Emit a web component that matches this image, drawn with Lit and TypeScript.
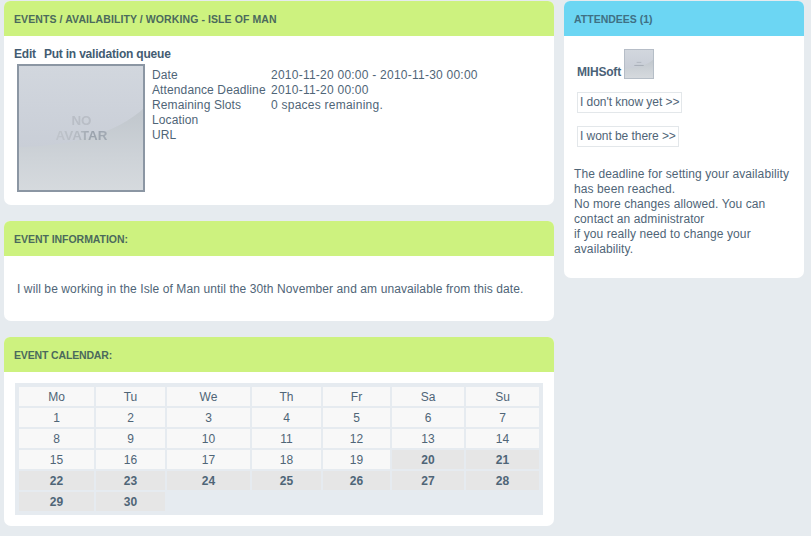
import { LitElement, html, css, svg } from "lit";
import { customElement } from "lit/decorators.js";

const days = Array.from({ length: 30 }, (_, i) => i + 1);

@customElement("app-root")
export class AppRoot extends LitElement {
  static styles = css`
    :host {
      display: block;
      width: 811px;
      height: 536px;
      overflow: hidden;
      background: #e6ebef;
      font-family: "Liberation Sans", Arial, sans-serif;
      font-size: 12px;
      line-height: 15px;
      color: #4f6577;
    }
    .page {
      display: grid;
      grid-template-columns: 550px 240px;
      column-gap: 10px;
      padding: 1px 0 0 4px;
      align-items: start;
    }
    .col {
      display: flex;
      flex-direction: column;
      gap: 16px;
    }
    .panel {
      background: #fff;
      border-radius: 6px 6px 7px 7px;
      overflow: hidden;
    }
    .head {
      height: 35px;
      box-sizing: border-box;
      padding: 11px 10px 0;
      background: #cdf27f;
      font-size: 10.5px;
      line-height: 15px;
      font-weight: bold;
      color: #4b6a5c;
      text-transform: uppercase;
    }
    .head.crumb { letter-spacing: 0.09px; }
    .head.info-h { letter-spacing: -0.04px; }
    .head.cal-h { letter-spacing: -0.15px; }
    .head.blue {
      background: #6cd6f3;
      color: #3f7084;
    }
    .p1 { height: 204px; }
    .p2 { height: 100px; }
    .p3 { height: 189px; }
    .right { height: 277px; }
    .links {
      padding: 11px 10px 0;
      height: 17px;
      box-sizing: content-box;
      margin-bottom: -1px;
      font-weight: bold;
      color: #435c72;
      display: flex;
      gap: 8px;
      letter-spacing: -0.2px;
    }
    .info {
      display: flex;
      padding: 1px 0 0 13px;
    }
    .avatar {
      display: block;
      width: 128px;
      height: 128px;
      flex: none;
    }
    .facts {
      margin-left: 7px;
      padding-top: 4px;
      display: grid;
      grid-template-columns: 119px auto;
      grid-auto-rows: 15px;
      justify-content: start;
      letter-spacing: 0.12px;
      white-space: nowrap;
    }
    .val { letter-spacing: 0.24px; }
    .text {
      padding: 26px 13px 0;
      letter-spacing: 0.1px;
    }
    .cal {
      margin: 11px 11px 0;
      padding: 4px;
      height: 124px;
      background: #e6ebf0;
      display: grid;
      grid-template-columns: 75px 69px 83px 69px 67px 72px 73px;
      grid-auto-rows: 19px;
      gap: 2px;
    }
    .cal div {
      background: #f8f8f8;
      text-align: center;
      line-height: 21px;
      height: 19px;
      overflow: hidden;
    }
    .cal div.off {
      background: #e6e6e6;
      font-weight: bold;
    }
    .user {
      padding: 13px 13px 0;
      display: flex;
      align-items: flex-end;
      gap: 3px;
      height: 30px;
      font-weight: bold;
      color: #4a6277;
      letter-spacing: -0.2px;
    }
    .user span { margin-bottom: -1px; }
    .mini {
      display: block;
      width: 30px;
      height: 30px;
    }
    .btn {
      display: block;
      width: fit-content;
      margin: 13px 0 0 13px;
      padding: 2px 2px 2px 2px;
      border: 1px solid #e3e7ea;
      height: 15px;
      background: #fff;
      letter-spacing: -0.05px;
    }
    .note {
      padding: 20px 10px 0;
      letter-spacing: 0.1px;
    }
  `;

  private avatar(cls: string, big: boolean) {
    const band = "M0 83 C50 83 100 70 128 43 V128 H0 Z";
    return html`<svg class=${cls} viewBox="0 0 128 128" aria-hidden="true">
      <defs>
        <linearGradient id=${"t" + cls} x1="0" y1="0" x2="0" y2="1">
          <stop offset="0" stop-color="#d2d7de" />
          <stop offset="0.65" stop-color="#c9ced7" />
        </linearGradient>
        <linearGradient id=${"b" + cls} x1="0" y1="0" x2="0" y2="1">
          <stop offset="0.1" stop-color="#c2c8ce" />
          <stop offset="0.6" stop-color="#ced3d8" />
          <stop offset="1" stop-color="#d6dade" />
        </linearGradient>
        <linearGradient id=${"x" + cls} x1="0" y1="0" x2="1" y2="0">
          <stop offset="0" stop-color="#c0c5cc" />
          <stop offset="0.45" stop-color="#b4bac2" />
          <stop offset="0.7" stop-color="#9aa2ac" />
          <stop offset="1" stop-color="#a3aab4" />
        </linearGradient>
        <filter id=${"f" + cls}><feGaussianBlur stdDeviation="0.35" /></filter>
      </defs>
      <rect width="128" height="128" fill=${`url(#t${cls})`} />
      ${svg`<path d=${band} fill=${`url(#b${cls})`} />`}
      ${big
        ? svg`<g filter=${`url(#f${cls})`} font-size="13.4" font-weight="bold" font-family="Liberation Sans" text-anchor="middle">
            <text x="64.5" y="61" fill="#b9bec6">NO</text>
            <text x="64.5" y="76" fill=${`url(#x${cls})`}>AVATAR</text>
          </g>`
        : svg`<rect x="54" y="55" width="20" height="4" fill="#b0b6be"/><rect x="44" y="68" width="40" height="4" fill="#a4abb4"/>`}
      <rect
        x=${big ? 1 : 2}
        y=${big ? 1 : 2}
        width=${big ? 126 : 124}
        height=${big ? 126 : 124}
        fill="none"
        stroke=${big ? "#8b96a3" : "#b4bcc6"}
        stroke-width=${big ? 2 : 4}
      />
    </svg>`;
  }

  render() {
    return html`<div class="page">
      <div class="col">
        <section class="panel p1">
          <div class="head crumb">Events / Availability / Working - Isle of Man</div>
          <div class="links"><span>Edit</span><span>Put in validation queue</span></div>
          <div class="info">
            ${this.avatar("avatar", true)}
            <div class="facts">
              <span>Date</span><span class="val">2010-11-20 00:00 - 2010-11-30 00:00</span>
              <span>Attendance Deadline</span><span class="val">2010-11-20 00:00</span>
              <span>Remaining Slots</span><span class="val">0 spaces remaining.</span>
              <span>Location</span><span></span>
              <span>URL</span><span></span>
            </div>
          </div>
        </section>
        <section class="panel p2">
          <div class="head info-h">Event information:</div>
          <div class="text">I will be working in the Isle of Man until the 30th November and am unavailable from this date.</div>
        </section>
        <section class="panel p3">
          <div class="head cal-h">Event calendar:</div>
          <div class="cal">
            ${["Mo", "Tu", "We", "Th", "Fr", "Sa", "Su"].map((d) => html`<div>${d}</div>`)}
            ${days.map((d) => html`<div class=${d >= 20 ? "off" : ""}>${d}</div>`)}
          </div>
        </section>
      </div>
      <section class="panel right">
        <div class="head blue">Attendees (1)</div>
        <div class="user"><span>MIHSoft</span>${this.avatar("mini", false)}</div>
        <div class="btn">I don't know yet &gt;&gt;</div>
        <div class="btn">I wont be there &gt;&gt;</div>
        <div class="note">
          The deadline for setting your availability<br />has been reached.<br />No more changes allowed. You can<br />contact an administrator<br />if you really need to change your<br />availability.
        </div>
      </section>
    </div>`;
  }
}
